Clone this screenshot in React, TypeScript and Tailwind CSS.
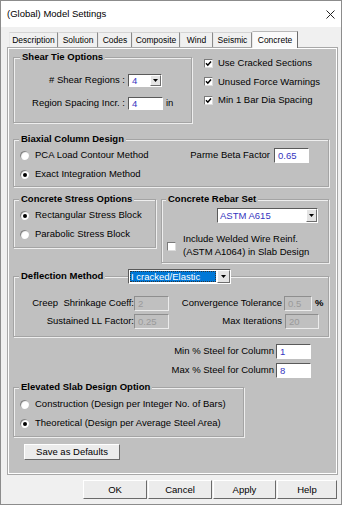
import React from "react";

function GroupBox({
  label,
  className,
  labelClass,
  children,
}: {
  label: string;
  className: string;
  labelClass: string;
  children?: React.ReactNode;
}) {
  return (
    <div
      className={`relative shrink-0 border border-[#a4a4a4] shadow-[inset_1px_1px_0_#eeeeee,1px_1px_0_#eeeeee] ${className}`}
    >
      <span
        className={`absolute top-[-7px] px-[2px] bg-[#c0c0c0] font-bold text-[9.5px] leading-[12px] whitespace-nowrap text-black ${labelClass}`}
      >
        {label}
      </span>
      {children}
    </div>
  );
}

function Radio({ checked, label }: { checked?: boolean; label: string }) {
  return (
    <div className="flex items-center h-[19px]">
      <span className="w-[9px] h-[9px] rounded-full bg-white shadow-[inset_1px_1px_1px_#7a7a7a] flex items-center justify-center shrink-0">
        {checked && <span className="w-[4px] h-[4px] rounded-full bg-black" />}
      </span>
      <span className="ml-[6px] whitespace-nowrap">{label}</span>
    </div>
  );
}

function Check({ checked }: { checked?: boolean }) {
  return (
    <span className="w-[9px] h-[9px] shrink-0 bg-white border border-t-[#7a7a7a] border-l-[#7a7a7a] border-r-[#dcdcdc] border-b-[#dcdcdc] flex items-center justify-center">
      {checked && (
        <svg width="7" height="7" viewBox="0 0 7 7">
          <path d="M1 3.3 L2.8 5.2 L6 1.4" stroke="#000" strokeWidth="1.5" fill="none" />
        </svg>
      )}
    </span>
  );
}

function Field({
  value,
  className,
  disabled,
}: {
  value: string;
  className: string;
  disabled?: boolean;
}) {
  return (
    <div
      className={`shrink-0 flex items-center pl-[3px] text-[9.5px] leading-none border ${
        disabled
          ? "bg-[#c0c0c0] text-[#9a9a9a] border-t-[#8e8e8e] border-l-[#8e8e8e] border-r-[#ececec] border-b-[#ececec]"
          : "bg-white text-[#3535c0] border-t-[#5a5a5a] border-l-[#5a5a5a] border-r-white border-b-white"
      } ${className}`}
    >
      {value}
    </div>
  );
}

function ArrowBtn({ className }: { className: string }) {
  return (
    <span
      className={`shrink-0 h-full bg-[#e4e4e4] border border-t-white border-l-white border-r-[#6e6e6e] border-b-[#6e6e6e] flex items-center justify-center ${className}`}
    >
      <svg width="5" height="3" viewBox="0 0 5 3">
        <path d="M0 0H5L2.5 3Z" fill="#000" />
      </svg>
    </span>
  );
}

const tabs = [
  { name: "Description", w: "w-[49px]" },
  { name: "Solution", w: "w-[40px]" },
  { name: "Codes", w: "w-[34px]" },
  { name: "Composite", w: "w-[48px]" },
  { name: "Wind", w: "w-[33px]" },
  { name: "Seismic", w: "w-[39px]" },
];

export default function App() {
  return (
    <div className="w-[342px] h-[505px] bg-[#f0f0f0] border border-[#8c8c8c] font-['Liberation_Sans',Arial,sans-serif] text-[9.5px] text-black overflow-hidden flex flex-col">
      {/* Title bar */}
      <div className="h-[26px] shrink-0 bg-white flex items-center pl-[6px] pr-[6px]">
        <span className="text-[9.5px] leading-none">(Global) Model Settings</span>
        <svg className="ml-auto" width="9" height="9" viewBox="0 0 9 9">
          <path d="M0.5 0.5L8.5 8.5M8.5 0.5L0.5 8.5" stroke="#222" strokeWidth="1" />
        </svg>
      </div>

      {/* Tabs */}
      <div className="h-[20px] shrink-0 flex items-end pl-[8px]">
        {tabs.map((t) => (
          <div
            key={t.name}
            className={`${t.w} h-[15px] flex items-center justify-center text-[8.5px] leading-none bg-[#f0f0f0] border-t border-l border-r border-t-[#d4d4d4] border-l-[#e8e8e8] border-r-[#8a8a8a]`}
          >
            {t.name}
          </div>
        ))}
        <div className="w-[46px] h-[17px] flex items-center justify-center text-[8.5px] leading-none bg-[#fafafa] border-t border-l border-r border-t-[#b8b8b8] border-l-[#e8e8e8] border-r-[#6a6a6a] relative top-[1px]">
          Concrete
        </div>
      </div>

      {/* Panel */}
      <div className="ml-[6px] w-[331px] h-[428px] shrink-0 border border-[#a8a8a8] p-[1px] bg-white">
        <div className="w-full h-full bg-[#c0c0c0] flex flex-col">
          {/* Row A */}
          <div className="flex items-start pl-[4px] mt-[8px]">
            <GroupBox label="Shear Tie Options" className="w-[179px] h-[66px]" labelClass="left-[6px]">
              <div className="pt-[16px]">
                <div className="flex items-center h-[13px]">
                  <span className="w-[111px] text-right whitespace-nowrap">
                    # Shear Regions :
                  </span>
                  <div className="ml-[3px] w-[34px] h-[13px] flex bg-white border border-t-[#5a5a5a] border-l-[#5a5a5a] border-r-white border-b-white">
                    <span className="flex-1 pl-[3px] text-[#3535c0] leading-[11px]">4</span>
                    <ArrowBtn className="w-[11px]" />
                  </div>
                </div>
                <div className="flex items-center h-[13px] mt-[10px]">
                  <span className="w-[111px] text-right whitespace-nowrap">
                    Region Spacing Incr. :
                  </span>
                  <Field value="4" className="ml-[3px] w-[35px] h-[13px]" />
                  <span className="ml-[3px]">in</span>
                </div>
              </div>
            </GroupBox>
            <div className="ml-[12px] mt-[-3px] flex flex-col">
              {["Use Cracked Sections", "Unused Force Warnings", "Min 1 Bar Dia Spacing"].map((s) => (
                <div key={s} className="h-[18.5px] flex items-center">
                  <Check checked />
                  <span className="ml-[5px] whitespace-nowrap">{s}</span>
                </div>
              ))}
            </div>
          </div>

          {/* Row B */}
          <GroupBox label="Biaxial Column Design" className="ml-[4px] mt-[16px] w-[316px] h-[48px]" labelClass="left-[5px]">
            <div className="flex">
              <div className="pl-[6px] pt-[6px]">
                <Radio label="PCA Load Contour Method" />
                <Radio checked label="Exact Integration Method" />
              </div>
              <div className="ml-auto mr-[19px] pt-[8px] flex items-center h-[23px]">
                <span className="whitespace-nowrap">Parme Beta Factor</span>
                <Field value="0.65" className="ml-[4px] w-[35px] h-[15px]" />
              </div>
            </div>
          </GroupBox>

          {/* Row C */}
          <div className="flex items-start pl-[4px] mt-[12px]">
            <GroupBox label="Concrete Stress Options" className="w-[143px] h-[49px]" labelClass="left-[5px]">
              <div className="pl-[6px] pt-[6px]">
                <Radio checked label="Rectangular Stress Block" />
                <Radio label="Parabolic Stress Block" />
              </div>
            </GroupBox>
            <GroupBox label="Concrete Rebar Set" className="ml-[5px] w-[168px] h-[64px]" labelClass="left-[4px]">
              <div className="pl-[55px] pt-[8px]">
                <div className="w-[101px] h-[15px] flex bg-white border border-t-[#5a5a5a] border-l-[#5a5a5a] border-r-white border-b-white">
                  <span className="flex-1 pl-[2px] text-[#3535c0] leading-[13px]">ASTM A615</span>
                  <ArrowBtn className="w-[11px]" />
                </div>
              </div>
              <div className="flex items-center pl-[5px] mt-[9px]">
                <span className="mt-[3px]">
                  <Check />
                </span>
                <span className="ml-[7px] leading-[13px]">
                  Include Welded Wire Reinf.
                  <br />
                  (ASTM A1064) in Slab Design
                </span>
              </div>
            </GroupBox>
          </div>

          {/* Row D */}
          <GroupBox label="Deflection Method" className="ml-[4px] mt-[13px] w-[316px] h-[61px]" labelClass="left-[5px]">
            <div className="absolute left-[114px] top-[-8px] w-[103px] h-[15px] flex bg-white border border-t-[#5a5a5a] border-l-[#5a5a5a] border-r-white border-b-white">
              <div className="flex-1 p-[1px]">
                <div className="h-full bg-[#0078d7] outline outline-1 outline-dotted outline-[#333] outline-offset-[-1px] text-white leading-[11px] pl-[1px] whitespace-nowrap">
                  I cracked/Elastic
                </div>
              </div>
              <ArrowBtn className="w-[13px]" />
            </div>
            <div className="pt-[19px]">
              <div className="flex items-center h-[15px]">
                <span className="w-[120px] text-right whitespace-pre">Creep  Shrinkage Coeff:</span>
                <Field disabled value="2" className="w-[35px] h-[15px]" />
                <span className="w-[113px] text-right whitespace-nowrap">Convergence Tolerance</span>
                <Field disabled value="0.5" className="ml-[2px] w-[28px] h-[15px]" />
                <span className="ml-[3px] font-bold">%</span>
              </div>
              <div className="flex items-center h-[15px] mt-[3px]">
                <span className="w-[120px] text-right whitespace-nowrap">Sustained LL Factor:</span>
                <Field disabled value="0.25" className="w-[35px] h-[15px]" />
                <span className="w-[113px] text-right whitespace-nowrap">Max Iterations</span>
                <Field disabled value="20" className="ml-[3px] w-[34px] h-[15px]" />
              </div>
            </div>
          </GroupBox>

          {/* Row E */}
          <div className="flex items-center h-[15px] mt-[7px]">
            <span className="w-[265px] text-right whitespace-nowrap">Min % Steel for Column</span>
            <Field value="1" className="ml-[2px] w-[35px] h-[15px]" />
          </div>
          <div className="flex items-center h-[15px] mt-[4px]">
            <span className="w-[265px] text-right whitespace-nowrap">Max % Steel for Column</span>
            <Field value="8" className="ml-[2px] w-[35px] h-[15px]" />
          </div>

          {/* Row F */}
          <GroupBox label="Elevated Slab Design Option" className="ml-[4px] mt-[9px] w-[231px] h-[50px]" labelClass="left-[5px]">
            <div className="pl-[6px] pt-[7px]">
              <Radio label="Construction (Design per Integer No. of Bars)" />
              <Radio checked label="Theoretical (Design per Average Steel Area)" />
            </div>
          </GroupBox>

          <button className="ml-[15px] mt-[7px] w-[96px] h-[16px] shrink-0 bg-[#ececec] border border-t-white border-l-white border-r-[#6a6a6a] border-b-[#6a6a6a] text-[9.5px] leading-none flex items-center justify-center">
            Save as Defaults
          </button>
        </div>
      </div>

      {/* Buttons */}
      <div className="flex pl-[82px] mt-[5px] gap-[1px]">
        {[
          ["OK", "w-[64px]"],
          ["Cancel", "w-[64px]"],
          ["Apply", "w-[63px]"],
          ["Help", "w-[60px]"],
        ].map(([t, w]) => (
          <button
            key={t}
            className={`${w} h-[19px] bg-[#ececec] border border-t-white border-l-white border-r-[#6a6a6a] border-b-[#6a6a6a] text-[9.5px] leading-none flex items-center justify-center`}
          >
            {t}
          </button>
        ))}
      </div>
    </div>
  );
}
